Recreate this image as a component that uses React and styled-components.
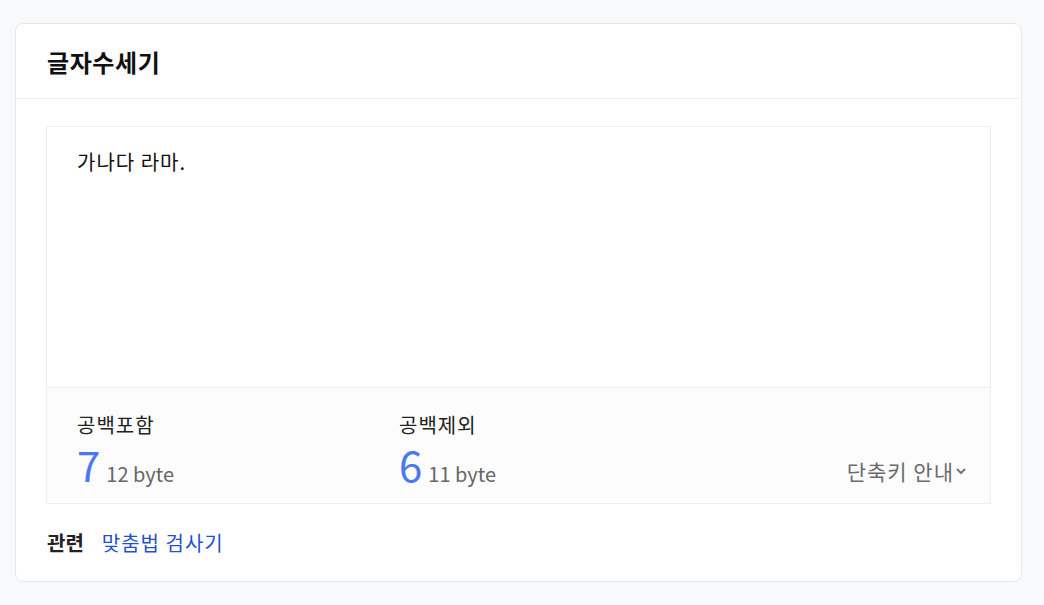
import styled, { createGlobalStyle } from "styled-components";

const Global = createGlobalStyle`
  html, body { margin: 0; padding: 0; background: #f8f9fb; }
  body { font-family: "Noto Sans CJK KR", "Noto Sans", sans-serif; color: #222; }
`;

const Page = styled.div`
  padding: 23px 22px 24px 15px;
`;

const Card = styled.section`
  background: #fff;
  border: 1px solid #e6e8eb;
  border-radius: 8px;
`;

const Header = styled.header`
  height: 74px;
  display: flex;
  align-items: center;
  padding: 0 31px;
  border-bottom: 1px solid #eceef0;
`;

const Title = styled.h2`
  margin: 0;
  font-size: 24px;
  letter-spacing: 0.6px;
  font-weight: 700;
  color: #111;
`;

const Body = styled.div`
  padding: 27px 30px 0;
`;

const Box = styled.div`
  border: 1px solid #eceef0;
`;

const TextArea = styled.div`
  height: 218px;
  padding: 20px 30px 22px;
  font-size: 20px;
  letter-spacing: 1px;
  line-height: 30px;
  color: #111;
  border-bottom: 1px solid #eceef0;
`;

const Stats = styled.div`
  background: #fcfcfc;
  display: flex;
  align-items: flex-end;
  padding: 15px 22px 14px 30px;
  height: 86px;
`;

const Stat = styled.div`
  width: 322px;
  display: flex;
  flex-direction: column;
`;

const Label = styled.div`
  font-size: 20px;
  letter-spacing: 1px;
  line-height: 28px;
  color: #222;
`;

const Value = styled.div`
  display: flex;
  align-items: baseline;
  gap: 6px;
`;

const Num = styled.span`
  font-size: 42px;
  line-height: 50px;
  color: #4a78f0;
`;

const Bytes = styled.span`
  font-size: 20px;
  color: #666;
`;

const Shortcut = styled.button`
  margin-left: auto;
  border: 0;
  background: none;
  padding: 0;
  font: inherit;
  font-size: 21px;
  letter-spacing: 1px;
  color: #6b6b6b;
  display: flex;
  align-items: center;
  margin-bottom: 3px;
  cursor: pointer;
`;

const Footer = styled.div`
  display: flex;
  align-items: center;
  gap: 18px;
  padding: 24px 31px 24px;
  font-size: 20px;
`;

const Related = styled.strong`
  font-weight: 700;
  color: #222;
`;

const RelLink = styled.a`
  color: #1f4fcf;
  letter-spacing: 1px;
  text-decoration: none;
`;

export default function App() {
  return (
    <Page>
      <Global />
      <Card>
        <Header>
          <Title>글자수세기</Title>
        </Header>
        <Body>
          <Box>
            <TextArea>가나다 라마.</TextArea>
            <Stats>
              <Stat>
                <Label>공백포함</Label>
                <Value>
                  <Num>7</Num>
                  <Bytes>12 byte</Bytes>
                </Value>
              </Stat>
              <Stat>
                <Label>공백제외</Label>
                <Value>
                  <Num>6</Num>
                  <Bytes>11 byte</Bytes>
                </Value>
              </Stat>
              <Shortcut>
                단축키 안내
                <svg width="14" height="14" viewBox="0 0 14 14">
                  <path d="M3 5 L7 9 L11 5" fill="none" stroke="#777" strokeWidth="2" />
                </svg>
              </Shortcut>
            </Stats>
          </Box>
        </Body>
        <Footer>
          <Related>관련</Related>
          <RelLink href="#">맞춤법 검사기</RelLink>
        </Footer>
      </Card>
    </Page>
  );
}
